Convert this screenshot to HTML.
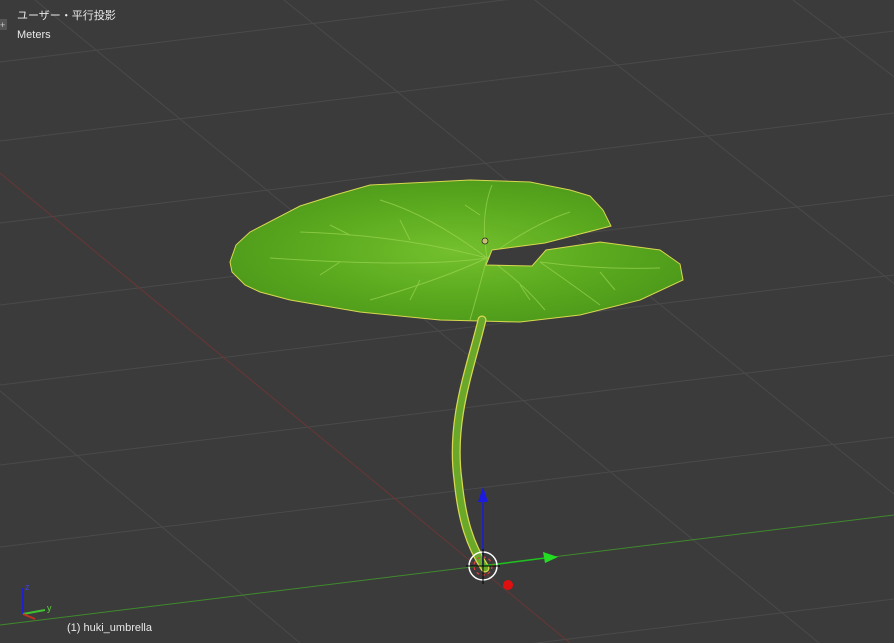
<!DOCTYPE html>
<html><head><meta charset="utf-8"><style>
html,body{margin:0;padding:0;background:#3b3b3b;width:894px;height:643px;overflow:hidden}
svg{display:block}
.t{position:absolute;color:#e8e8e8;font-family:"Liberation Sans","Noto Sans CJK JP",sans-serif;font-size:11px;line-height:13px}
</style></head><body>
<svg width="894" height="643" style="position:absolute;left:0;top:0">
<defs>
<radialGradient id="g" cx="0.5" cy="0.5" r="0.6">
<stop offset="0" stop-color="#74c02e"/><stop offset="0.55" stop-color="#5aa91e"/><stop offset="1" stop-color="#4a961a"/></radialGradient>
<clipPath id="lc"><path id="leafp" d="M230,262 L236,245 L250,232 L300,206 L335,195 L370,185 L470,180 L530,182 L570,190 L590,196 L603,210 L611,226 L545,243 L492,250 L486,265 L532,266 L546,250 L600,242 L660,250 L680,264 L683,280 L640,300 L580,315 L520,322 L440,320 L360,312 L290,300 L260,292 L245,285 L232,272 Z"/></clipPath>
</defs>
<g stroke="#4a4a4a" stroke-width="1">
<line x1="0" y1="62" x2="894" y2="-48"/>
<line x1="0" y1="141" x2="894" y2="31"/>
<line x1="0" y1="223" x2="894" y2="113"/>
<line x1="0" y1="305" x2="894" y2="195"/>
<line x1="0" y1="385" x2="894" y2="275"/>
<line x1="0" y1="465" x2="894" y2="355"/>
<line x1="0" y1="547" x2="894" y2="437"/>
<line x1="0" y1="709" x2="894" y2="599"/>
<line x1="-465" y1="0" x2="300" y2="643"/>
<line x1="35" y1="0" x2="819" y2="643"/>
<line x1="284" y1="0" x2="1078" y2="643"/>
<line x1="535" y1="0" x2="1349" y2="643"/>
<line x1="793" y1="0" x2="1639" y2="643"/>
</g>
<line x1="-210" y1="0" x2="570" y2="643" stroke="#6a3636" stroke-width="1"/>
<line x1="0" y1="625" x2="894" y2="515" stroke="#3f8a2c" stroke-width="1"/>
<use href="#leafp" fill="url(#g)"/>
<g clip-path="url(#lc)" stroke="#9ad452" stroke-width="1" fill="none" opacity="0.7">
<path d="M487,258 Q400,235 300,232 M487,258 Q430,215 380,200 M487,258 Q480,215 492,185 M487,258 Q530,225 570,212 M487,258 Q440,280 370,300 M487,258 Q420,268 270,258 M487,258 Q520,280 545,310 M487,258 Q480,285 470,320 M540,262 Q600,270 660,268 M540,262 Q580,290 600,305"/>
<path d="M410,240 L400,220 M350,235 L330,225 M420,280 L410,300 M520,285 L530,300 M340,262 L320,275 M480,215 L465,205 M600,272 L615,290"/>
</g>
<use href="#leafp" fill="none" stroke="#d8d850" stroke-width="1"/>
<circle cx="485" cy="241" r="3" fill="#c8c070" stroke="#222" stroke-width="0.7"/>
<path d="M482,320 C470,370 450,420 458,480 C462,520 470,545 485,568" fill="none" stroke="#d8d850" stroke-width="9" stroke-linecap="round"/>
<path d="M482,320 C470,370 450,420 458,480 C462,520 470,545 485,568" fill="none" stroke="#6aa82a" stroke-width="6.5" stroke-linecap="round"/>
<line x1="483" y1="566" x2="483" y2="500" stroke="#1a1ae0" stroke-width="1.5"/>
<path d="M483,487 L478,502 L488,502 Z" fill="#1a1ae0"/>
<line x1="483" y1="566" x2="545" y2="558" stroke="#1fc01f" stroke-width="1.5"/>
<path d="M558,557 L543,552 L545,563 Z" fill="#22dd22"/>
<circle cx="508" cy="585" r="5" fill="#e01010"/>
<circle cx="483" cy="566" r="14" fill="none" stroke="#fff" stroke-width="1.5"/>
<circle cx="483" cy="566" r="9" fill="none" stroke="#e04040" stroke-width="1.2" stroke-dasharray="3,3"/>
<line x1="466" y1="566" x2="500" y2="566" stroke="#000" stroke-width="1"/>
<line x1="483" y1="549" x2="483" y2="584" stroke="#000" stroke-width="1"/>
<line x1="23" y1="614" x2="23" y2="588" stroke="#2020d0" stroke-width="2"/>
<text x="25" y="590" fill="#4040e0" font-size="9" font-family="Liberation Sans">z</text>
<line x1="23" y1="614" x2="45" y2="610" stroke="#40c030" stroke-width="2"/>
<text x="47" y="611" fill="#60d040" font-size="9" font-family="Liberation Sans">y</text>
<line x1="23" y1="614" x2="35" y2="619" stroke="#c03020" stroke-width="2"/>
<rect x="0" y="19" width="7" height="11" fill="#555"/>
<text x="0" y="28" fill="#ccc" font-size="9" font-family="Liberation Sans">+</text>
</svg>
<div class="t" style="left:17px;top:10px">ユーザー・平行投影</div>
<div class="t" style="left:17px;top:29px">Meters</div>
<div class="t" style="left:67px;top:622px">(1) huki_umbrella</div>
</body></html>
